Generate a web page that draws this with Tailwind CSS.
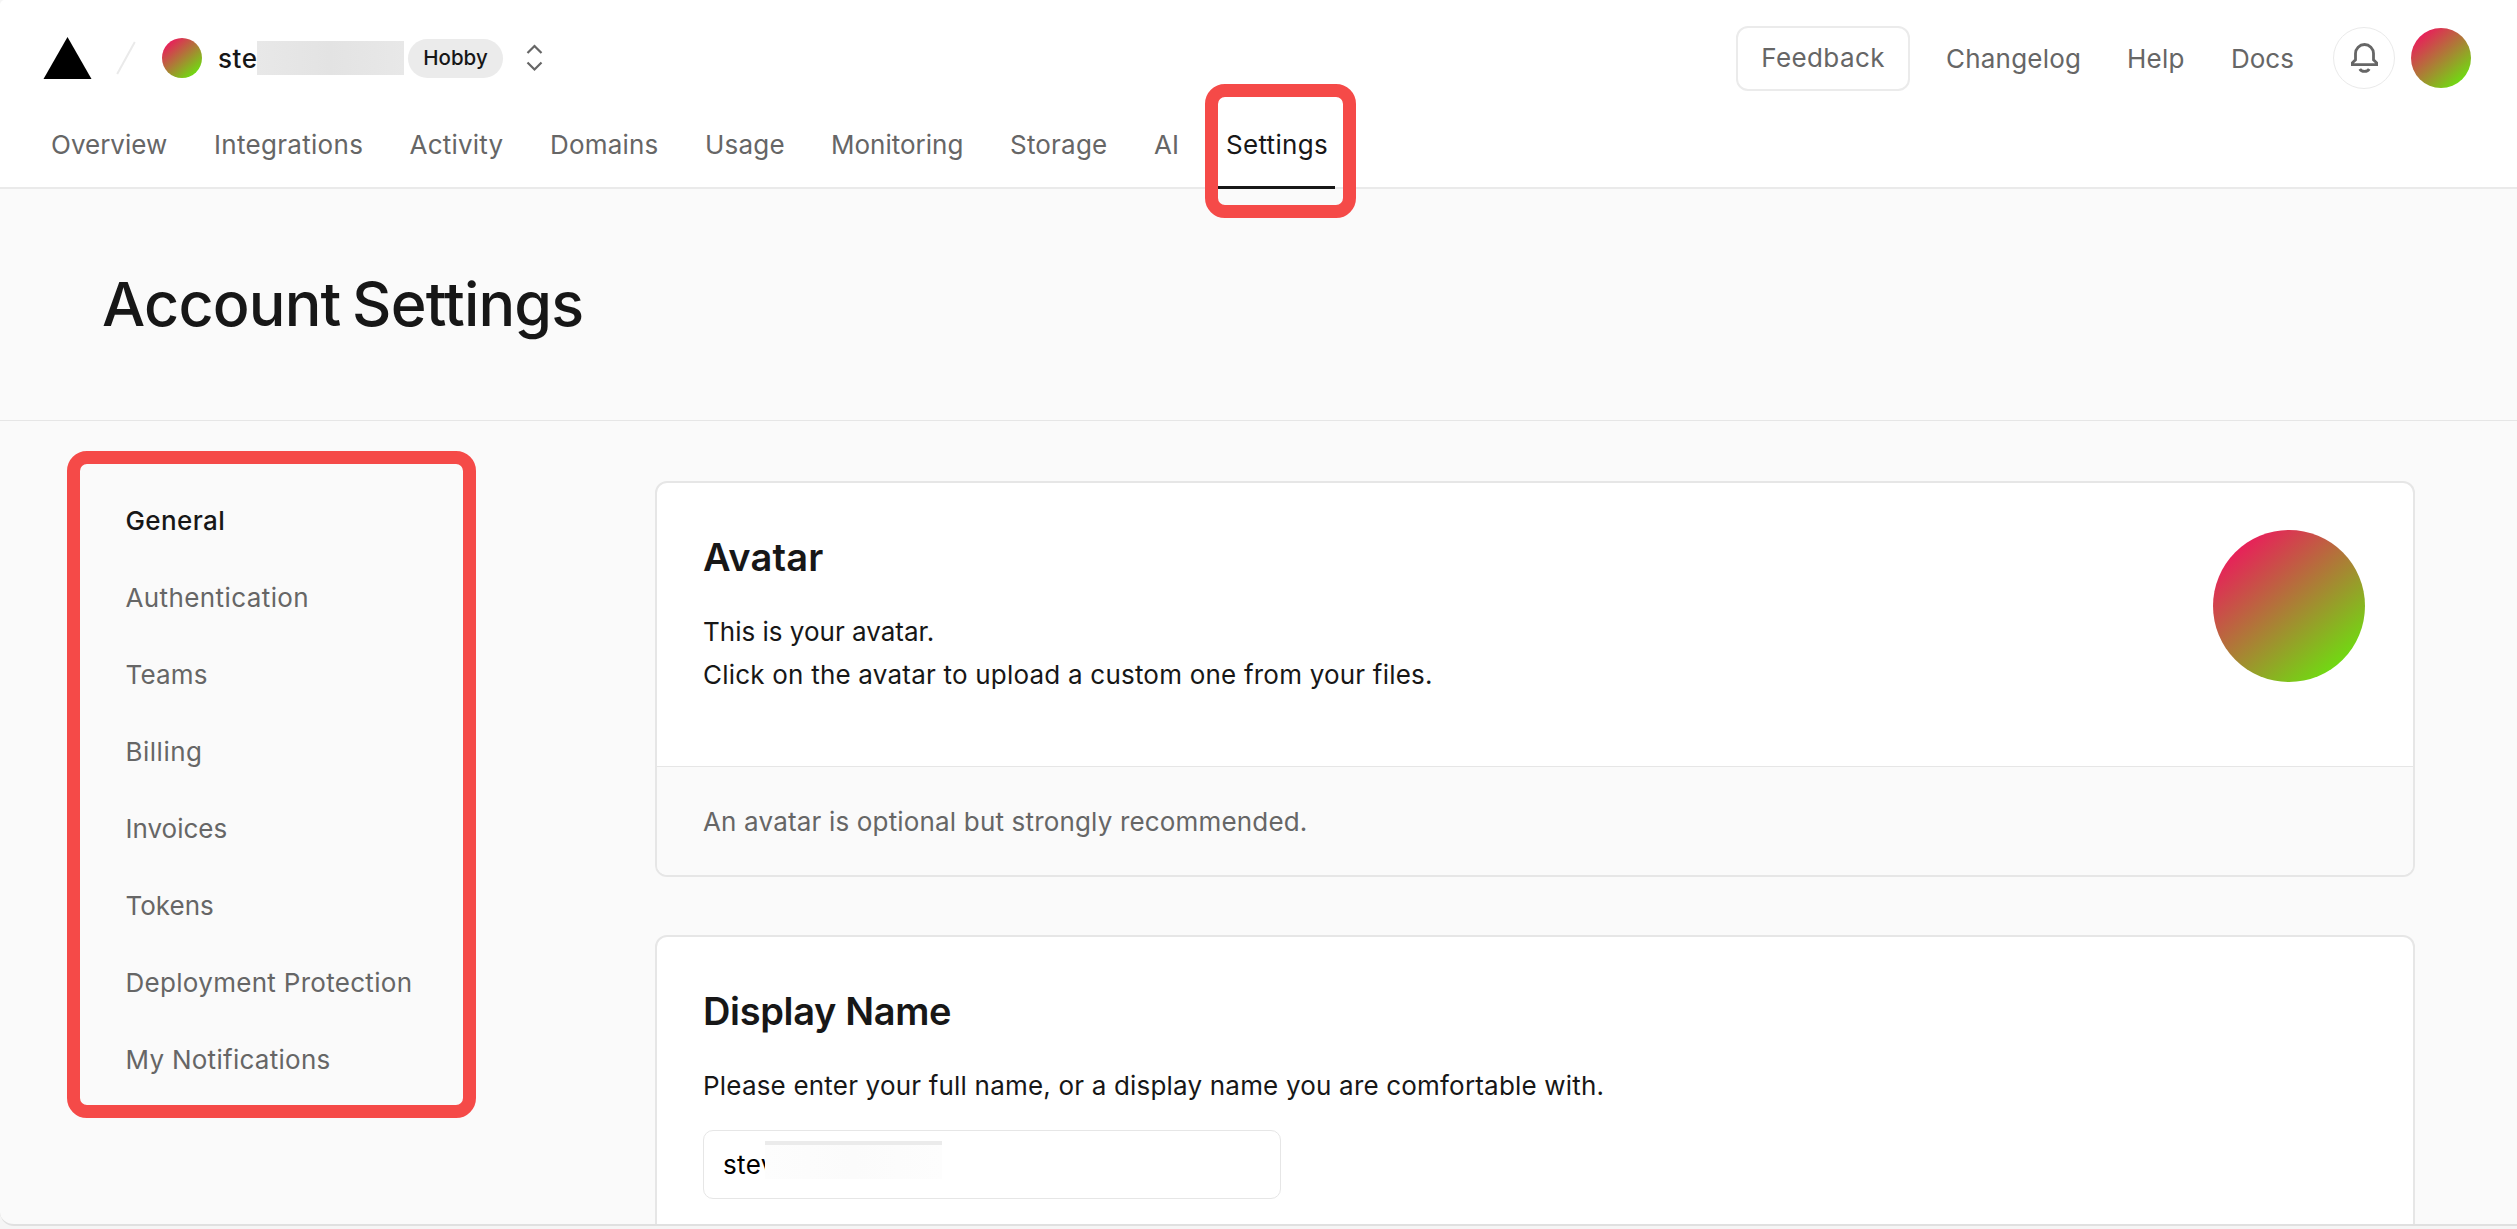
<!DOCTYPE html>
<html lang="en">
<head>
<meta charset="utf-8">
<title>Account Settings</title>
<script src="https://cdn.jsdelivr.net/npm/@tailwindcss/browser@4"></script>
</head>
<body class="h-[1229px] overflow-hidden bg-[#f5f5f5] font-['Inter',sans-serif] text-[26px] text-[#171717]">
<div class="relative flex h-[1226px] flex-col overflow-hidden rounded-tl-[5px] rounded-bl-[14px] border-b-2 border-[#e0e0e0] bg-[#fafafa]">

  <header class="h-[189px] shrink-0 border-b-2 border-[#eaeaea] bg-white">
    <div class="flex h-[116px] items-center justify-between pl-[43px] pr-[46px]">
      <div class="flex items-center">
        <svg class="h-[42px] w-[49px]" viewBox="0 0 49 42"><path d="M24.5 0L48.5 42H0.5Z" fill="#000"/></svg>
        <svg class="ml-[24px] h-[34px] w-[20px]" viewBox="0 0 20 34" fill="none"><path d="M18.8 1L1.2 33" stroke="#eaeaea" stroke-width="2"/></svg>
        <div class="ml-[26px] size-[40px] rounded-full bg-[linear-gradient(140deg,#e8205a_14%,#70da12_86%)]"></div>
        <span class="ml-[16px] w-[39px] whitespace-nowrap font-medium tracking-[0.6px]">ste</span>
        <span class="relative h-[34px] w-[147px] bg-linear-to-r from-[#e8e8e8] via-[#e3e3e3] to-[#e8e8e8]"></span>
        <span class="ml-[4px] flex h-[39px] w-[95px] items-center justify-center rounded-full bg-[#ebebeb] text-[20.5px] font-medium">Hobby</span>
        <svg class="ml-[23px] h-[28px] w-[17px]" viewBox="0 0 17 28" fill="none" stroke="#666" stroke-width="2.2"><path d="M1.5 9L8.5 2L15.5 9M1.5 18.5L8.5 25.5L15.5 18.5"/></svg>
      </div>
      <div class="flex items-center text-[#666]">
        <div class="mr-[36px] flex h-[65px] w-[174px] items-center justify-center rounded-[12px] border-2 border-[#ebebeb] pb-[2px] tracking-[0.4px]">Feedback</div>
        <span class="w-[181px] tracking-[0.2px]">Changelog</span>
        <span class="w-[104px] tracking-[0.2px]">Help</span>
        <span class="w-[102px]">Docs</span>
        <div class="flex size-[62px] items-center justify-center rounded-full border border-[#eaeaea] bg-white">
          <svg class="h-[31px] w-[29px]" viewBox="0 0 29 31" fill="none" stroke="#666" stroke-width="2.8"><path d="M5.5 10.5V16.8L2.4 19.8V21.6H26.6V19.8L23.5 16.8V10.5A9 9 0 0 0 5.5 10.5Z"/><path d="M9.8 26A5 3.6 0 0 0 19.2 26"/></svg>
        </div>
        <div class="ml-[16px] size-[60px] rounded-full bg-[linear-gradient(140deg,#e8205a_14%,#70da12_86%)]"></div>
      </div>
    </div>
    <nav class="flex h-[71px] items-center pl-[51px] text-[#666]">
      <a class="w-[163px] pb-[14px]">Overview</a>
      <a class="w-[195.5px] pb-[14px] tracking-[0.3px]">Integrations</a>
      <a class="w-[140.5px] pb-[14px] tracking-[0.2px]">Activity</a>
      <a class="w-[155px] pb-[14px] tracking-[0.2px]">Domains</a>
      <a class="w-[126px] pb-[14px] tracking-[0.2px]">Usage</a>
      <a class="w-[179px] pb-[14px]">Monitoring</a>
      <a class="w-[144px] pb-[14px] tracking-[0.2px]">Storage</a>
      <a class="w-[64px] pb-[14px]">AI</a>
      <a class="relative flex h-full w-[117px] items-center pb-[14px] pl-[8px] tracking-[0.3px] text-[#171717] after:absolute after:-bottom-[2px] after:left-0 after:h-[3px] after:w-full after:bg-[#171717]">Settings</a>
    </nav>
  </header>

  <div class="flex h-[232px] shrink-0 items-center border-b border-[#e6e6e6] pl-[102px]">
    <h1 class="text-[61px] font-medium leading-none tracking-[-0.8px] [word-spacing:-4px]">Account Settings</h1>
  </div>

  <main class="flex min-h-0 flex-1 overflow-hidden">
    <aside class="w-[655px] shrink-0 pl-[125.5px] pt-[61px] text-[#666]">
      <ul class="leading-[77px]">
        <li class="font-medium tracking-[0.4px] text-[#171717]">General</li>
        <li class="tracking-[0.4px]">Authentication</li>
        <li class="tracking-[0.2px]">Teams</li>
        <li class="tracking-[0.5px]">Billing</li>
        <li>Invoices</li>
        <li>Tokens</li>
        <li class="tracking-[0.3px]">Deployment Protection</li>
        <li class="tracking-[0.28px]">My Notifications</li>
      </ul>
    </aside>

    <div class="flex w-[1760px] shrink-0 flex-col gap-[58px] pt-[60px]">
      <section class="flex h-[396px] shrink-0 flex-col overflow-hidden rounded-[12px] border-2 border-[#e6e6e6] bg-white">
        <div class="flex flex-1 justify-between pl-[46px] pr-[48px]">
          <div class="pt-[50px]">
            <h2 class="text-[38px] font-semibold leading-[48px] tracking-[0.2px]">Avatar</h2>
            <p class="mt-[29px] leading-[43px]">This is your avatar.</p>
            <p class="leading-[43px] tracking-[0.21px]">Click on the avatar to upload a custom one from your files.</p>
          </div>
          <div class="mt-[47px] size-[152px] rounded-full bg-[linear-gradient(140deg,#e8205a_14%,#70da12_86%)]"></div>
        </div>
        <div class="flex h-[109px] items-center border-t border-[#e6e6e6] bg-[#fafafa] pl-[46px] tracking-[0.17px] text-[#666]">An avatar is optional but strongly recommended.</div>
      </section>

      <section class="h-[396px] shrink-0 rounded-[12px] border-2 border-[#e6e6e6] bg-white pl-[46px] pt-[50px]">
        <h2 class="text-[38px] font-semibold leading-[48px] tracking-[-0.35px]">Display Name</h2>
        <p class="mt-[29px] leading-[43px] tracking-[0.19px]">Please enter your full name, or a display name you are comfortable with.</p>
        <div class="mt-[23px] flex h-[69px] w-[578px] items-center rounded-[10px] border border-[#e6e6e6] pl-[19px] text-black">
          <span class="w-[42px] whitespace-nowrap tracking-[0.4px]">stev</span>
          <span class="relative mb-[9px] h-[38px] w-[177px] border-t-4 border-[#ebebeb] bg-linear-to-r from-[#fdfdfd] via-[#fbfbfb] to-[#fdfdfd]"></span>
        </div>
      </section>
    </div>
  </main>

  <!-- highlight frames -->
  <div class="absolute left-[1205px] top-[84px] h-[134px] w-[151px] rounded-[20px] border-[13px] border-[#f54a48]"></div>
  <div class="absolute left-[67px] top-[451px] h-[667px] w-[409px] rounded-[20px] border-[13px] border-[#f54a48]"></div>
</div>
</body>
</html>
